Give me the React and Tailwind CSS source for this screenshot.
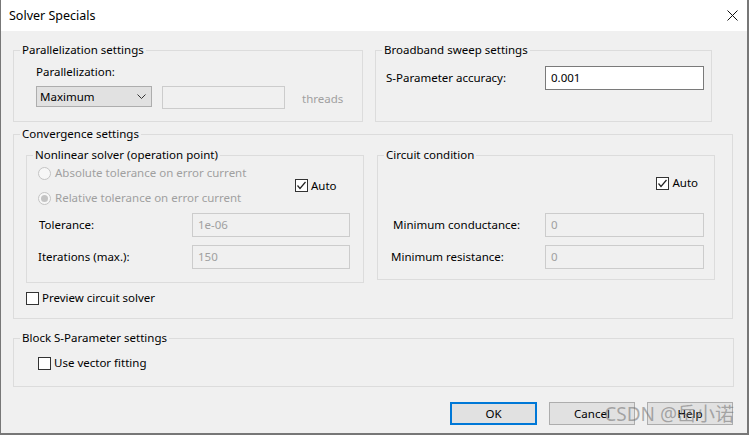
import React from "react";

const font = { fontFamily: '"Noto Sans", "Liberation Sans", sans-serif' };

function Group({ title, className = "", children }) {
  return (
    <fieldset className={`border border-[#dcdcdc] ${className}`}>
      <legend className="ml-[6px] px-[2px] text-[11.5px] leading-[16px] text-black">{title}</legend>
      {children}
    </fieldset>
  );
}

function Check({ checked, label }) {
  return (
    <div className="flex items-center h-[16px]">
      <span className="flex h-[13px] w-[13px] items-center justify-center border border-[#333] bg-white">
        {checked && (
          <svg width="11" height="11" viewBox="0 0 11 11">
            <polyline points="1.5,5.5 4,8.5 9.5,2" fill="none" stroke="#222" strokeWidth="1.2" />
          </svg>
        )}
      </span>
      <span className="ml-[3px]">{label}</span>
    </div>
  );
}

function Radio({ checked, label }) {
  return (
    <div className="flex items-center h-[16px] text-[#a0a0a0]">
      <span className="flex h-[13px] w-[13px] items-center justify-center rounded-full border border-[#c4c4c4] bg-[#f7f7f7]">
        {checked && <span className="h-[7px] w-[7px] rounded-full bg-[#c4c4c4]" />}
      </span>
      <span className="ml-[4px]">{label}</span>
    </div>
  );
}

function Field({ value, disabled, className = "" }) {
  return (
    <div
      className={`flex h-[24px] items-start pl-[5px] pt-[3px] ${
        disabled ? "border border-[#cccccc] bg-[#f0f0f0] text-[#a0a0a0]" : "border border-[#7a7a7a] bg-white text-black"
      } ${className}`}
    >
      {value}
    </div>
  );
}

function Button({ label, primary }) {
  return (
    <div
      className={`flex h-[23px] items-center justify-center bg-[#e1e1e1] ${
        primary ? "w-[87px] border-2 border-[#0078d7]" : "w-[86px] border border-[#adadad]"
      }`}
    >
      {label}
    </div>
  );
}

export default function App() {
  return (
    <div
      style={font}
      className="relative flex h-[435px] w-[749px] flex-col overflow-hidden border-l border-r-2 border-b-2 border-[#777] bg-[#f0f0f0] text-[11.5px] leading-[16px] text-black"
    >
      <div className="flex h-[31px] shrink-0 items-center justify-between bg-white pl-[8px] pr-[8px]">
        <span className="text-[12.5px]">Solver Specials</span>
        <svg width="11" height="11" viewBox="0 0 11 11" className="mr-[1px]">
          <path d="M0.5 0.5 L10.5 10.5 M10.5 0.5 L0.5 10.5" stroke="#111" strokeWidth="1" />
        </svg>
      </div>

      <div className="flex flex-col pl-[12px] pt-[11px]">
        <div className="flex gap-[12px]">
          <Group title="Parallelization settings" className="h-[80px] w-[350px]">
            <div className="pl-[22px]">
              <div className="mt-[6px]">Parallelization:</div>
              <div className="mt-[6px] flex items-start">
                <div className="flex h-[21px] w-[116px] items-center justify-between border border-[#adadad] bg-[#e1e1e1] pl-[3px] pr-[5px]">
                  <span>Maximum</span>
                  <svg width="9" height="6" viewBox="0 0 9 6">
                    <polyline points="0.5,0.5 4.5,4.5 8.5,0.5" fill="none" stroke="#333" strokeWidth="1" />
                  </svg>
                </div>
                <div className="ml-[10px] h-[23px] w-[123px] border border-[#cccccc] bg-[#f0f0f0]" />
                <span className="ml-[17px] mt-[5px] text-[#a0a0a0]">threads</span>
              </div>
            </div>
          </Group>
          <Group title="Broadband sweep settings" className="h-[80px] w-[337px]">
            <div className="mt-[8px] flex items-center pl-[10px]">
              <span className="w-[159px]">S-Parameter accuracy:</span>
              <Field value="0.001" className="w-[159px]" />
            </div>
          </Group>
        </div>

        <Group title="Convergence settings" className="mt-[4px] h-[193px] w-[720px]">
          <div className="mt-[5px] flex gap-[13px] pl-[12px]">
            <Group title="Nonlinear solver (operation point)" className="h-[136px] w-[338px]">
              <div className="pl-[11px]">
                <div className="mt-[2px] flex items-center">
                  <div className="flex w-[257px] flex-col gap-[9px]">
                    <Radio label="Absolute tolerance on error current" />
                    <Radio checked label="Relative tolerance on error current" />
                  </div>
                  <Check checked label="Auto" />
                </div>
                <div className="mt-[7px] flex items-center">
                  <span className="w-[154px] pl-[1px]">Tolerance:</span>
                  <Field disabled value="1e-06" className="w-[158px]" />
                </div>
                <div className="mt-[8px] flex items-center">
                  <span className="w-[154px]">Iterations (max.):</span>
                  <Field disabled value="150" className="w-[158px]" />
                </div>
              </div>
            </Group>
            <Group title="Circuit condition" className="h-[133px] w-[338px]">
              <div className="mt-[12px] flex justify-end pr-[16px]">
                <Check checked label="Auto" />
              </div>
              <div className="mt-[22px] flex items-center pl-[15px]">
                <span className="w-[152px]">Minimum conductance:</span>
                <Field disabled value="0" className="w-[159px]" />
              </div>
              <div className="mt-[8px] flex items-center pl-[13px]">
                <span className="w-[154px]">Minimum resistance:</span>
                <Field disabled value="0" className="w-[159px]" />
              </div>
            </Group>
          </div>
          <div className="mt-[7px] pl-[12px]">
            <Check label="Preview circuit solver" />
          </div>
        </Group>

        <Group title="Block S-Parameter settings" className="mt-[11px] h-[57px] w-[721px]">
          <div className="mt-[9px] pl-[24px]">
            <Check label="Use vector fitting" />
          </div>
        </Group>

        <div className="mt-[15px] flex justify-end gap-[12px] pr-[14px]">
          <Button primary label="OK" />
          <Button label="Cancel" />
          <Button label="Help" />
        </div>
      </div>

      <div
        className="absolute bottom-[7px] right-[13px] text-[19px] leading-[24px] text-[rgba(110,110,110,0.55)]"
        style={{ fontFamily: '"Noto Sans", "Noto Sans CJK SC", sans-serif' }}
      >
        CSDN @岳小诺
      </div>
    </div>
  );
}
